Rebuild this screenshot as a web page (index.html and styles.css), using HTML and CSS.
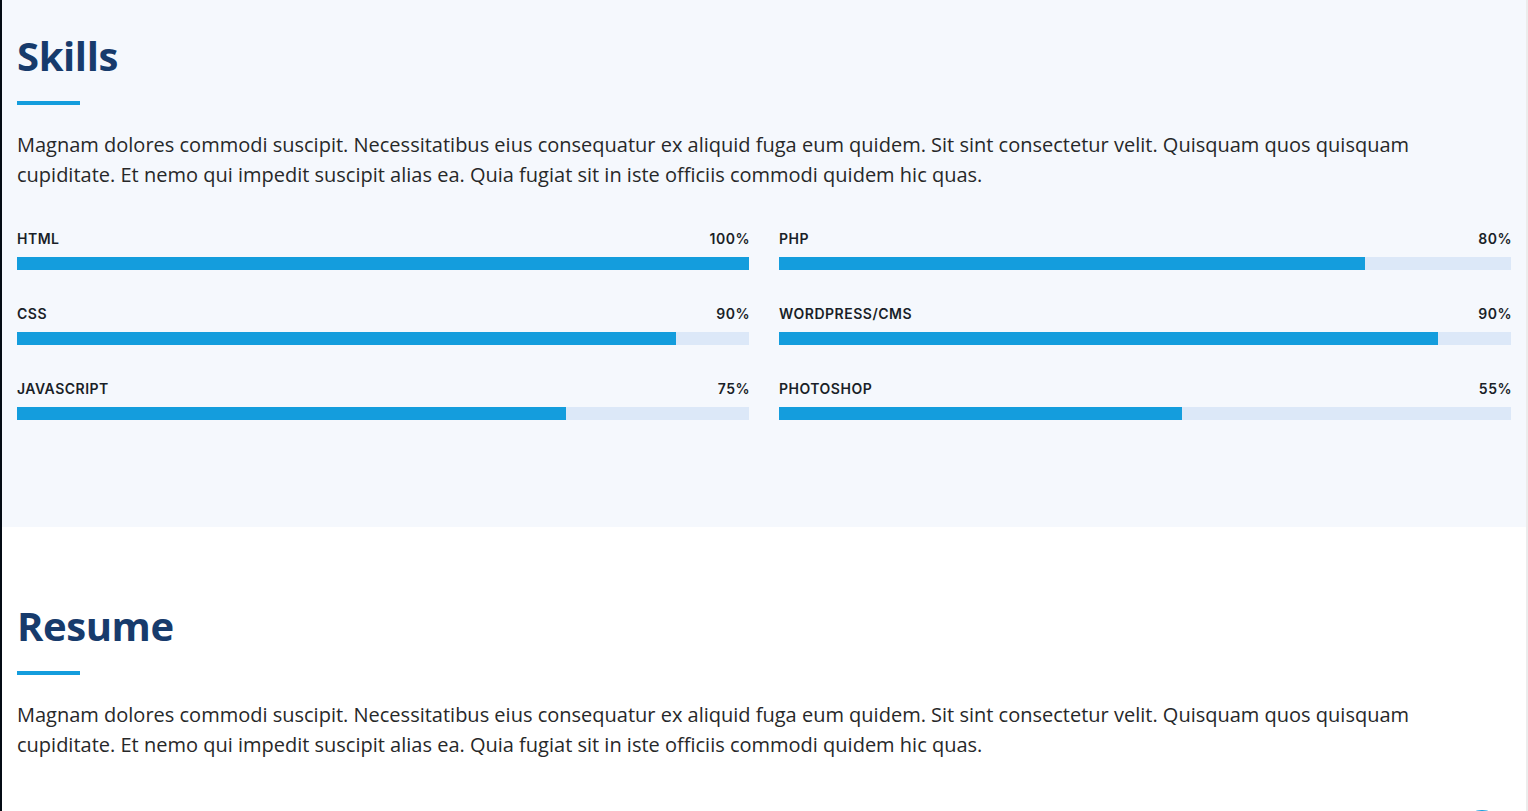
FILE: index.html
```html
<!DOCTYPE html>
<html lang="en">
<head>
<meta charset="utf-8">
<title>Skills &amp; Resume</title>
<link rel="stylesheet" href="styles.css">
</head>
<body>
<div class="page">
  <main class="main">
    <section class="section skills">
      <div class="container">
        <div class="section-title">
          <h2>Skills</h2>
          <p>Magnam dolores commodi suscipit. Necessitatibus eius consequatur ex aliquid fuga eum quidem. Sit sint consectetur velit. Quisquam quos quisquam cupiditate. Et nemo qui impedit suscipit alias ea. Quia fugiat sit in iste officiis commodi quidem hic quas.</p>
        </div>
        <div class="skills-grid">
          <div class="skills-col">
            <div class="progress">
              <div class="skill"><span>HTML</span><i class="val">100%</i></div>
              <div class="bar-wrap"><div class="bar" style="width:100%"></div></div>
            </div>
            <div class="progress">
              <div class="skill"><span>CSS</span><i class="val">90%</i></div>
              <div class="bar-wrap"><div class="bar" style="width:90%"></div></div>
            </div>
            <div class="progress">
              <div class="skill"><span>JavaScript</span><i class="val">75%</i></div>
              <div class="bar-wrap"><div class="bar" style="width:75%"></div></div>
            </div>
          </div>
          <div class="skills-col">
            <div class="progress">
              <div class="skill"><span>PHP</span><i class="val">80%</i></div>
              <div class="bar-wrap"><div class="bar" style="width:80%"></div></div>
            </div>
            <div class="progress">
              <div class="skill"><span>WordPress/CMS</span><i class="val">90%</i></div>
              <div class="bar-wrap"><div class="bar" style="width:90%"></div></div>
            </div>
            <div class="progress">
              <div class="skill"><span>Photoshop</span><i class="val">55%</i></div>
              <div class="bar-wrap"><div class="bar" style="width:55%"></div></div>
            </div>
          </div>
        </div>
      </div>
    </section>
    <section class="section resume">
      <div class="container">
        <div class="section-title">
          <h2>Resume</h2>
          <p>Magnam dolores commodi suscipit. Necessitatibus eius consequatur ex aliquid fuga eum quidem. Sit sint consectetur velit. Quisquam quos quisquam cupiditate. Et nemo qui impedit suscipit alias ea. Quia fugiat sit in iste officiis commodi quidem hic quas.</p>
        </div>
      </div>
    </section>
  </main>
  <a class="back-to-top" href="#" aria-label="Back to top"></a>
</div>
</body>
</html>
```

FILE: styles.css
```css
* { box-sizing: border-box; }
html, body { margin: 0; padding: 0; }
body {
  font-family: "Open Sans", "Liberation Sans", sans-serif;
  color: #272829;
  background: #fff;
  overflow: hidden;
}
.page {
  border-left: 2px solid #040b14;
  border-right: 2px solid #ececec;
  min-height: 811px;
}
.container { padding: 0 15px; }
.skills {
  background: #f5f8fd;
  padding: 32px 0 73px;
}
.resume {
  background: #fff;
  padding: 75px 0 60px;
}
.section-title h2 {
  font-family: "Open Sans", "Liberation Sans", sans-serif;
  font-size: 40px;
  line-height: 48px;
  font-weight: 700;
  letter-spacing: -0.4px;
  color: #173b6c;
  margin: 0 0 25px;
  padding-bottom: 25px;
  position: relative;
}
.section-title h2::after {
  content: "";
  position: absolute;
  left: 0;
  bottom: 0;
  width: 63px;
  height: 4px;
  background: #149ddd;
}
.section-title p {
  margin: 0;
  font-size: 20px;
  line-height: 30px;
}
.skills-grid {
  display: grid;
  grid-template-columns: 1fr 1fr;
  column-gap: 30px;
  padding-top: 39px;
}
.progress { height: 75px; }
.skill {
  display: flex;
  justify-content: space-between;
  font-family: Inter, "Liberation Sans", sans-serif;
  font-weight: 600;
  font-size: 14px;
  line-height: 20px;
  letter-spacing: 0.5px;
  text-transform: uppercase;
  color: #1a1f28;
  margin-bottom: 8px;
}
.skill .val { font-style: normal; margin-right: -1px; }
.bar-wrap {
  background: #dce8f8;
  height: 13px;
}
.bar {
  background: #149ddd;
  height: 13px;
}
.back-to-top {
  position: fixed;
  left: 1457px;
  top: 810px;
  width: 50px;
  height: 50px;
  border-radius: 50%;
  background: #149ddd;
}
```
